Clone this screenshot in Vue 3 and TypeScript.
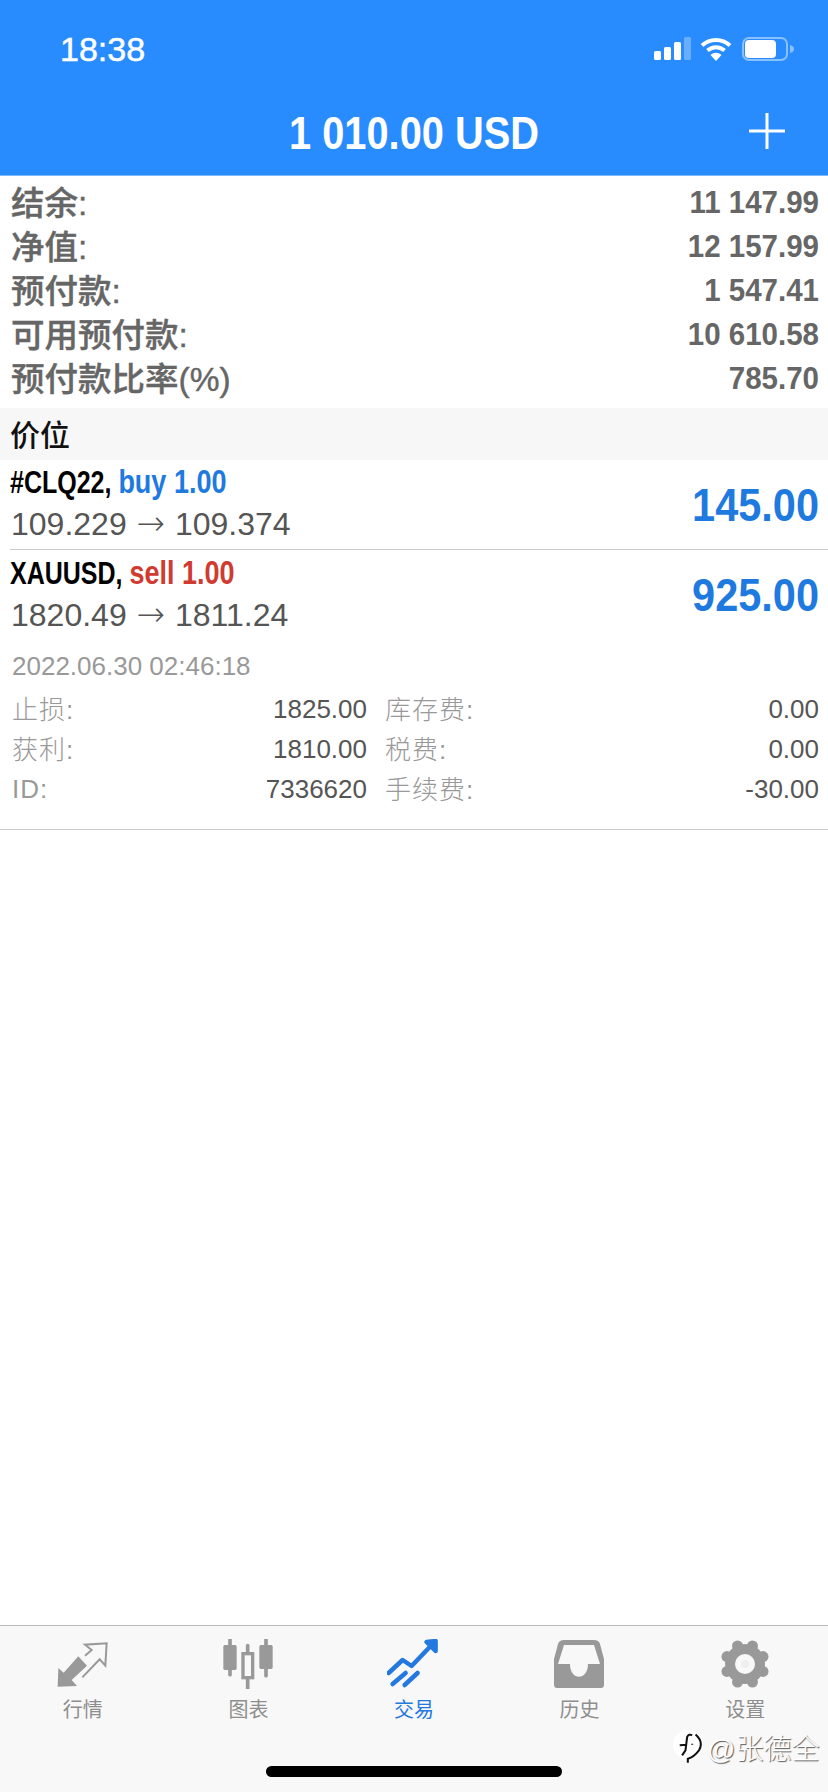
<script setup lang="ts">
const summary = [
  { label: '结余:', value: '11 147.99' },
  { label: '净值:', value: '12 157.99' },
  { label: '预付款:', value: '1 547.41' },
  { label: '可用预付款:', value: '10 610.58' },
  { label: '预付款比率(%)', value: '785.70' },
]
const details = [
  { a: '止损:', b: '1825.00', c: '库存费:', d: '0.00' },
  { a: '获利:', b: '1810.00', c: '税费:', d: '0.00' },
  { a: 'ID:', b: '7336620', c: '手续费:', d: '-30.00' },
]
const lobes = Array.from({ length: 8 }, (_, i) => {
  const t = (i * Math.PI) / 4 + Math.PI / 8
  return { x: 25 + 19.5 * Math.cos(t), y: 25 + 19.5 * Math.sin(t) }
})
</script>

<template>
  <div class="page">
    <header class="head">
      <div class="status">
        <span class="time">18:38</span>
        <div class="status-icons">
          <svg class="signal" width="37" height="24" viewBox="0 0 37 24">
            <rect x="0" y="14" width="7" height="9" rx="1.5" fill="#fff" />
            <rect x="10" y="10" width="7" height="13" rx="1.5" fill="#fff" />
            <rect x="20" y="5" width="7" height="18" rx="1.5" fill="#fff" />
            <rect x="30" y="0" width="7" height="23" rx="1.5" fill="#fff" opacity=".3" />
          </svg>
          <svg width="32" height="24" viewBox="0 0 32 24">
            <path d="M2 8.500C10 1 22 1 30 8.500" fill="none" stroke="#fff" stroke-width="4" />
            <path d="M7.500 13.500C12.500 9 19.500 9 24.500 13.500" fill="none" stroke="#fff" stroke-width="4" />
            <path d="M16 24L10.500 18C14 15 18 15 21.500 18Z" fill="#fff" />
          </svg>
          <svg width="53" height="24" viewBox="0 0 53 24">
            <rect x="1" y="1" width="44" height="22" rx="6" fill="none" stroke="#fff" stroke-opacity=".45" stroke-width="2" />
            <rect x="3" y="3" width="31" height="18" rx="4" fill="#fff" />
            <path d="M48 8C51 9 52 10 52 12C52 14 51 15 48 16Z" fill="#fff" opacity=".45" />
          </svg>
        </div>
      </div>
      <div class="title-bar">
        <span class="title">1 010.00 USD</span>
        <svg class="plus" width="36" height="36" viewBox="0 0 36 36">
          <path d="M18 0V36M0 18H36" stroke="#fff" stroke-width="3" />
        </svg>
      </div>
    </header>

    <main class="main">
      <section class="summary">
        <div v-for="row in summary" :key="row.label" class="sum-row">
          <span class="sum-label">{{ row.label }}</span>
          <span class="sum-value">{{ row.value }}</span>
        </div>
      </section>

      <div class="section-title">价位</div>

      <section class="position bordered">
        <div class="pos-text">
          <div class="pos-name">#CLQ22, <span class="side buy">buy 1.00</span></div>
          <div class="pos-price">109.229 <span class="arrow">→</span> 109.374</div>
        </div>
        <span class="profit">145.00</span>
      </section>

      <section class="position">
        <div class="pos-text">
          <div class="pos-name">XAUUSD, <span class="side sell">sell 1.00</span></div>
          <div class="pos-price">1820.49 <span class="arrow">→</span> 1811.24</div>
        </div>
        <span class="profit">925.00</span>
      </section>

      <section class="details">
        <div class="date">2022.06.30 02:46:18</div>
        <div v-for="row in details" :key="row.a" class="detail-row">
          <span class="dt-label" :class="{ latin: row.a === 'ID:' }">{{ row.a }}</span>
          <span class="dt-value">{{ row.b }}</span>
          <span class="dt-label second">{{ row.c }}</span>
          <span class="dt-value">{{ row.d }}</span>
        </div>
      </section>
    </main>

    <nav class="tabs">
      <div class="tab">
        <svg width="54" height="50" viewBox="165 85 162 150">
          <path d="M170 228L172 172L188 186L232 137L258 165L212 208L228 226Z" fill="#999" />
          <path d="M252 135L272 118L252 102L317 98L313 165L296 146L244 200" fill="none" stroke="#999" stroke-width="6" />
        </svg>
        <span>行情</span>
      </div>
      <div class="tab">
        <svg width="54" height="50" viewBox="663 85 162 150">
          <path d="M690 87V192M798 87V195M743 105V233" stroke="#999" stroke-width="11" stroke-linecap="round" />
          <rect x="670" y="103" width="40" height="75" rx="5" fill="#999" />
          <rect x="778" y="103" width="40" height="72" rx="5" fill="#999" />
          <rect x="729" y="129" width="29" height="72" fill="#f8f8f8" stroke="#999" stroke-width="10" />
        </svg>
        <span>图表</span>
      </div>
      <div class="tab active">
        <svg width="54" height="50" viewBox="7.400 9 54 50">
          <g fill="none" stroke="#2479e0" stroke-width="4.500" stroke-linecap="round" stroke-linejoin="round">
            <path d="M9 43L23 30L32 36L53 14" />
            <path d="M47 12L56 11L56 21Z" fill="#2479e0" />
            <path d="M13 54L26 43" />
            <path d="M25 55L38 43" />
          </g>
        </svg>
        <span>交易</span>
      </div>
      <div class="tab">
        <svg width="54" height="50" viewBox="1 0 54 50">
          <path d="M12 1H42C45 1 47 2 48 5L52 20V45C52 48 51 49 49 49H5C3 49 2 48 2 45V20L6 5C7 2 9 1 12 1Z" fill="#999" />
          <path d="M12 6H42L48 25H36C36 42 18 42 18 25H6Z" fill="#f8f8f8" />
        </svg>
        <span>历史</span>
      </div>
      <div class="tab">
        <svg width="50" height="50" viewBox="0 0 50 50">
          <circle cx="25" cy="25" r="20" fill="#999" />
          <circle v-for="(p, i) in lobes" :key="i" :cx="p.x" :cy="p.y" r="5.500" fill="#999" />
          <circle cx="25" cy="25" r="10" fill="#f8f8f8" />
          <circle cx="25" cy="25" r="4" fill="#eee" />
        </svg>
        <span>设置</span>
      </div>
      <div class="home-bar"></div>
      <div class="watermark">
        <svg width="32" height="34" viewBox="15 25 95 100">
          <circle cx="62" cy="68" r="44" fill="#fff" />
          <path d="M38 70L58 68M75 40Q65 35 60 45L55 85L45 100M75 65V68M85 38Q110 60 95 85Q80 105 62 110V122" fill="none" stroke="#111" stroke-width="6" />
        </svg>
        <span>@张德全</span>
      </div>
    </nav>
  </div>
</template>

<style>
html, body { margin: 0; background: #fff; }
</style>

<style scoped>
.page {
  width: 828px;
  height: 1792px;
  display: flex;
  flex-direction: column;
  overflow: hidden;
  background: #fff;
  font-family: "Liberation Sans", "Noto Sans CJK SC", sans-serif;
}
.head {
  height: 176px;
  box-sizing: border-box;
  flex: none;
  background: #288cff;
  color: #fff;
  padding-top: 30px;
  border-bottom: 1px solid #7db8fb;
}
.status {
  height: 38px;
  display: flex;
  align-items: center;
  justify-content: space-between;
  padding: 0 33px 0 60px;
}
.time { font-size: 34px; -webkit-text-stroke: .5px #fff; }
.status-icons { display: flex; align-items: center; gap: 10px; }
.signal { margin-right: -1px; }
.title-bar {
  margin-top: 27px;
  height: 76px;
  position: relative;
  display: flex;
  align-items: center;
  justify-content: center;
}
.title { display: inline-block; font-size: 39.800px; font-weight: 700; transform: scaleY(1.17); }
.plus { position: absolute; right: 43px; top: 18px; }
.main { flex: 1; }
.summary { padding: 2px 9px 10px 11px; }
.sum-row {
  height: 44px;
  display: flex;
  align-items: center;
  justify-content: space-between;
  color: #666;
}
.sum-label {
  font-size: 33.500px;
  font-weight: 500;
  -webkit-text-stroke: .4px #666;
}
.sum-value { display: inline-block; margin-top: 4px; font-size: 29.500px; font-weight: 700; transform: scaleY(1.09); }
.section-title {
  height: 52px;
  box-sizing: border-box;
  padding: 0 0 3px 10px;
  display: flex;
  align-items: center;
  background: #f7f7f7;
  color: #111;
  font-size: 30px;
  font-weight: 500;
}
.position {
  height: 90px;
  box-sizing: border-box;
  display: flex;
  align-items: center;
  justify-content: space-between;
  padding-left: 10px;
  padding-right: 9px;
}
.bordered { border-bottom: 1px solid #ccc; margin-left: 10px; padding-left: 0; }
.pos-text { padding-bottom: 7px; }
.pos-name {
  height: 40px;
  line-height: 40px;
  margin-top: 1px;
  font-size: 25px;
  font-weight: 700;
  color: #000;
  transform: scaleY(1.25);
  transform-origin: left center;
}
.side { font-size: 27px; }
.pos-price {
  height: 36px;
  line-height: 36px;
  margin: 3px 0 0 1px;
  font-size: 32px;
  color: #555;
}
.arrow { font-family: "DejaVu Sans", sans-serif; font-weight: 200; font-size: 34px; margin: 0 1px; }
.buy { color: #1f7ae0; }
.sell { color: #d03a30; }
.profit {
  display: inline-block;
  font-size: 41.500px;
  font-weight: 700;
  color: #1f7ae0;
  transform: scaleY(1.1);
  margin-top: 2px;
}
.details {
  height: 190px;
  box-sizing: border-box;
  padding: 6px 9px 0 12px;
  border-bottom: 1px solid #ccc;
}
.date { height: 40px; line-height: 40px; font-size: 26px; color: #999; margin-bottom: 3px; }
.detail-row {
  height: 40px;
  display: grid;
  grid-template-columns: 100px 255px 100px 1fr;
  align-items: center;
  font-size: 26px;
}
.dt-label { color: #999; font-weight: 300; margin-top: -4px; letter-spacing: 1px; }
.latin { margin-top: 0; }
.dt-value { color: #555; text-align: right; }
.second { margin-left: 18px; white-space: nowrap; }
.tabs {
  height: 167px;
  box-sizing: border-box;
  flex: none;
  position: relative;
  display: grid;
  grid-template-columns: repeat(5, 1fr);
  align-items: start;
  padding-top: 13px;
  background: #f8f8f8;
  border-top: 1px solid #bbb;
}
.tab {
  display: flex;
  flex-direction: column;
  align-items: center;
  gap: 5px;
  color: #8e8e8e;
  font-size: 20px;
}
.active { color: #2479e0; }
.home-bar {
  position: absolute;
  left: 266px;
  top: 140px;
  width: 296px;
  height: 11px;
  border-radius: 6px;
  background: #000;
}
.watermark {
  position: absolute;
  left: 672px;
  top: 101px;
  display: flex;
  align-items: center;
  gap: 3px;
  color: #fff;
  font-size: 28px;
  font-weight: 300;
  text-shadow: 1px 1px 1px rgba(0, 0, 0, .65);
}
</style>
